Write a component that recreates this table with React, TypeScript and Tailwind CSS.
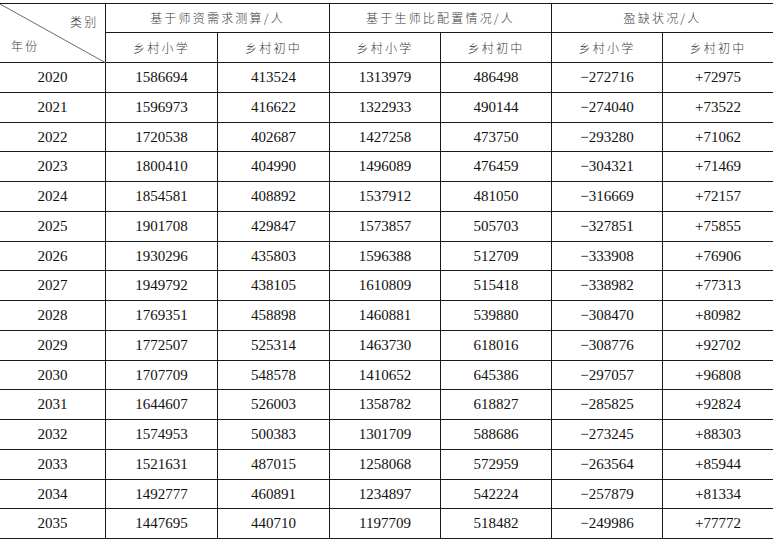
import React from 'react';

const rows: [string, string, string, string, string, string, string][] = [
    ['2020', '1586694', '413524', '1313979', '486498', '−272716', '+72975'],
    ['2021', '1596973', '416622', '1322933', '490144', '−274040', '+73522'],
    ['2022', '1720538', '402687', '1427258', '473750', '−293280', '+71062'],
    ['2023', '1800410', '404990', '1496089', '476459', '−304321', '+71469'],
    ['2024', '1854581', '408892', '1537912', '481050', '−316669', '+72157'],
    ['2025', '1901708', '429847', '1573857', '505703', '−327851', '+75855'],
    ['2026', '1930296', '435803', '1596388', '512709', '−333908', '+76906'],
    ['2027', '1949792', '438105', '1610809', '515418', '−338982', '+77313'],
    ['2028', '1769351', '458898', '1460881', '539880', '−308470', '+80982'],
    ['2029', '1772507', '525314', '1463730', '618016', '−308776', '+92702'],
    ['2030', '1707709', '548578', '1410652', '645386', '−297057', '+96808'],
    ['2031', '1644607', '526003', '1358782', '618827', '−285825', '+92824'],
    ['2032', '1574953', '500383', '1301709', '588686', '−273245', '+88303'],
    ['2033', '1521631', '487015', '1258068', '572959', '−263564', '+85944'],
    ['2034', '1492777', '460891', '1234897', '542224', '−257879', '+81334'],
    ['2035', '1447695', '440710', '1197709', '518482', '−249986', '+77772'],
];

const cjk = "font-['Noto_Sans_CJK_SC',sans-serif] font-light text-[12px] tracking-[2.2px] text-[#3c3c3c]";
const cell = 'flex items-center justify-center border-b border-[#1a1a1a]';

export default function App() {
    return (
        <div className="w-[780px] h-[541px] bg-white pt-[3px] overflow-hidden">
            <div className="w-[773px] border-t border-[#1a1a1a] grid grid-cols-[106px_112px_112px_111px_111px_111px_110px] grid-rows-[29px_30px_repeat(16,29.75px)]">
                <div className="relative row-span-2 border-b border-r border-[#1a1a1a]">
                    <svg className="absolute inset-0" width="106" height="59" viewBox="0 0 106 59">
                        <line x1="0" y1="0" x2="106" y2="59" stroke="#6a6a6a" strokeWidth="1" />
                    </svg>
                    <span className={`absolute left-[70px] top-[9px] ${cjk}`}>类别</span>
                    <span className={`absolute left-[11px] top-[33px] ${cjk}`}>年份</span>
                </div>
                <div className={`col-span-2 border-r ${cell} ${cjk}`}>基于师资需求测算/人</div>
                <div className={`col-span-2 border-r ${cell} ${cjk}`}>基于生师比配置情况/人</div>
                <div className={`col-span-2 ${cell} ${cjk}`}>盈缺状况/人</div>
                {['乡村小学', '乡村初中', '乡村小学', '乡村初中', '乡村小学', '乡村初中'].map((t, i) => (
                    <div key={i} className={`${cell} ${i < 5 ? 'border-r' : ''} ${cjk}`}>
                        {t}
                    </div>
                ))}
                {rows.map((r) =>
                    r.map((v, j) => (
                        <div
                            key={r[0] + j}
                            className={`${cell} ${j < 6 ? 'border-r' : ''} font-['Liberation_Serif',serif] text-[15px] text-[#111]`}
                        >
                            {v}
                        </div>
                    ))
                )}
            </div>
        </div>
    );
}
